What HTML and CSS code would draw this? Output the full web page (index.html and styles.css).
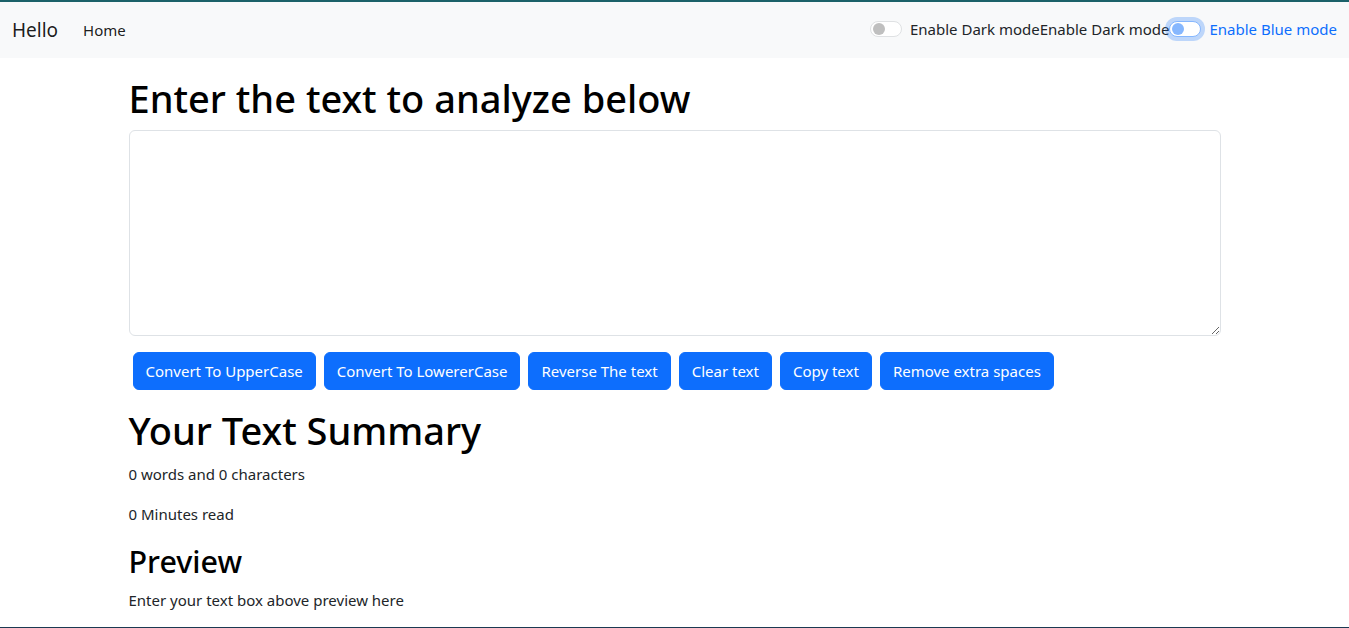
FILE: index.html
```html
<!DOCTYPE html>
<html lang="en">
<head>
<meta charset="utf-8">
<title>TextUtils</title>
<link rel="stylesheet" href="styles.css">
</head>
<body>
<nav class="navbar">
  <div class="nav-left">
    <span class="brand">Hello</span>
    <span class="nav-link">Home</span>
  </div>
  <div class="nav-right">
    <div class="check">
      <span class="switch"><span class="knob"></span></span>
      <span class="label">Enable Dark mode</span>
    </div>
    <span class="label">Enable Dark mode</span>
    <div class="check">
      <span class="switch focused"><span class="knob"></span></span>
      <span class="label blue">Enable Blue mode</span>
    </div>
  </div>
</nav>
<main class="container">
  <h1 class="title">Enter the text to analyze below</h1>
  <textarea class="box" rows="8"></textarea>
  <div class="buttons">
    <button class="btn">Convert To UpperCase</button>
    <button class="btn">Convert To LowererCase</button>
    <button class="btn">Reverse The text</button>
    <button class="btn">Clear text</button>
    <button class="btn">Copy text</button>
    <button class="btn">Remove extra spaces</button>
  </div>
</main>
<section class="container summary">
  <h1 class="title">Your Text Summary</h1>
  <p class="para">0 words and 0 characters</p>
  <p class="para">0 Minutes read</p>
  <h2 class="sub">Preview</h2>
  <p class="para">Enter your text box above preview here</p>
</section>
<div class="bottom-line"></div>
</body>
</html>
```
FILE: styles.css
```css
* { box-sizing: border-box; }
html, body { margin: 0; padding: 0; }
body {
  font-family: "Noto Sans", "Open Sans", sans-serif;
  font-size: 16px;
  line-height: 1.5;
  color: #212529;
  background: #fff;
  border-top: 2px solid #1b6169;
}
.navbar {
  background: #f8f9fa;
  height: 56px;
  padding: 0 12px;
  display: flex;
  align-items: center;
  justify-content: space-between;
}
.nav-left { display: flex; align-items: center; }
.brand {
  font-size: 19px;
  line-height: 30px;
  color: rgba(0,0,0,.9);
  margin-right: 16px;
}
.nav-link {
  padding: 8px 8px 8px 9px;
  font-size: 15px;
  color: rgba(0,0,0,.9);
}
.nav-right { display: flex; align-items: center; font-size: 15px; margin-top: -2px; }
.check { display: flex; align-items: center; }
.switch {
  position: relative;
  width: 32px;
  height: 16px;
  border: 1px solid #dfe1e3;
  border-radius: 8px;
  background: #fff;
  margin-right: 8px;
  display: flex;
  align-items: center;
  padding-left: 2px;
}
.knob {
  width: 12px;
  height: 12px;
  border-radius: 50%;
  background: #bfbfbf;
}
.switch.focused {
  border-color: #86b7fe;
  box-shadow: 0 0 0 4px rgba(13,110,253,.25);
}
.switch.focused .knob { background: #86b7fe; }
.label { color: #212529; }
.label.blue { color: #0d6efd; }
.container {
  width: 1092px;
  margin: 16px auto;
}
.title {
  font-size: 38px;
  font-weight: 500;
  line-height: 48px;
  margin: 0 0 8px;
  color: #000;
}
.box {
  display: block;
  width: 100%;
  height: 206px;
  border: 1px solid #dee2e6;
  border-radius: 6px;
  margin: 0 0 16px;
  padding: 6px 12px;
  font: inherit;
  resize: vertical;
}
.buttons { display: flex; gap: 8px; padding-left: 4px; }
.btn {
  font-family: inherit;
  font-size: 15px;
  line-height: 24px;
  padding: 6px 12px;
  height: 38px;
  border: 1px solid #0d6efd;
  background: #0d6efd;
  color: #fff;
  border-radius: 6px;
}
.para {
  margin: 0 0 16px;
  font-size: 15px;
  line-height: 24px;
}
.sub {
  font-size: 30.5px;
  font-weight: 500;
  line-height: 38px;
  margin: 0 0 8px;
  color: #000;
}
.bottom-line {
  position: fixed;
  left: 0;
  right: 0;
  bottom: 0;
  height: 1px;
  background: #1b3a52;
}
```
